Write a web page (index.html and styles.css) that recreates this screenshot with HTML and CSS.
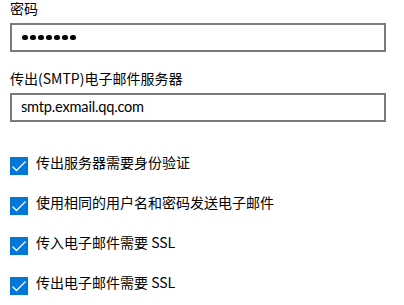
FILE: index.html
```html
<!DOCTYPE html>
<html lang="zh-CN">
<head>
<meta charset="utf-8">
<link rel="stylesheet" href="styles.css">
</head>
<body>
<div class="form">
  <div class="field first">
    <div class="label">密码</div>
    <div class="box"><span class="dots"><i></i><i></i><i></i><i></i><i></i><i></i><i></i></span></div>
  </div>
  <div class="field">
    <div class="label">传出(SMTP)电子邮件服务器</div>
    <div class="box"><span class="value">smtp.exmail.qq.com</span></div>
  </div>
  <div class="checks">
    <div class="check">
      <span class="cb"><svg viewBox="0 0 18 18" width="18" height="18"><path d="M2.5 9.5 L6.5 13.5 L15.5 4.5" fill="none" stroke="#fff" stroke-width="1.3"/></svg></span>
      <span class="text">传出服务器需要身份验证</span>
    </div>
    <div class="check">
      <span class="cb"><svg viewBox="0 0 18 18" width="18" height="18"><path d="M2.5 9.5 L6.5 13.5 L15.5 4.5" fill="none" stroke="#fff" stroke-width="1.3"/></svg></span>
      <span class="text">使用相同的用户名和密码发送电子邮件</span>
    </div>
    <div class="check">
      <span class="cb"><svg viewBox="0 0 18 18" width="18" height="18"><path d="M2.5 9.5 L6.5 13.5 L15.5 4.5" fill="none" stroke="#fff" stroke-width="1.3"/></svg></span>
      <span class="text">传入电子邮件需要 SSL</span>
    </div>
    <div class="check">
      <span class="cb"><svg viewBox="0 0 18 18" width="18" height="18"><path d="M2.5 9.5 L6.5 13.5 L15.5 4.5" fill="none" stroke="#fff" stroke-width="1.3"/></svg></span>
      <span class="text">传出电子邮件需要 SSL</span>
    </div>
  </div>
</div>
</body>
</html>
```

FILE: styles.css
```css
html, body {
  margin: 0;
  padding: 0;
  background: #fff;
  overflow: hidden;
}
body {
  width: 404px;
  height: 305px;
  font-family: "Noto Sans CJK SC", "Microsoft YaHei", sans-serif;
  font-size: 14px;
  color: #000;
}
.form {
  padding: 0 18px 0 10px;
  display: flex;
  flex-direction: column;
}
.field {
  display: flex;
  flex-direction: column;
  gap: 5px;
  margin-top: 16px;
}
.field.first {
  margin-top: 0;
  gap: 6px;
}
.label {
  line-height: 20px;
  height: 20px;
}
.first .label {
  line-height: 17px;
  height: 17px;
}
.box {
  height: 29px;
  box-sizing: border-box;
  border: 2px solid #7a7a7a;
  display: flex;
  align-items: center;
  padding-left: 9px;
}
.dots {
  display: flex;
  gap: 2.5px;
  margin-left: 1px;
}
.dots i {
  width: 5.5px;
  height: 5.5px;
  border-radius: 50%;
  background: #000;
}
.value {
  font-family: Lato, "Noto Sans CJK SC", sans-serif;
  font-size: 14.6px;
  letter-spacing: -0.2px;
  line-height: 20px;
  margin-top: -1px;
}
.checks {
  margin-top: 35px;
  display: flex;
  flex-direction: column;
  gap: 22px;
}
.check {
  display: flex;
  align-items: flex-start;
  gap: 8px;
  height: 18px;
}
.cb {
  width: 18px;
  height: 18px;
  background: #0078d7;
  display: block;
  flex: none;
}
.cb svg {
  display: block;
}
.text {
  line-height: 20px;
  margin-top: -5px;
}
```
